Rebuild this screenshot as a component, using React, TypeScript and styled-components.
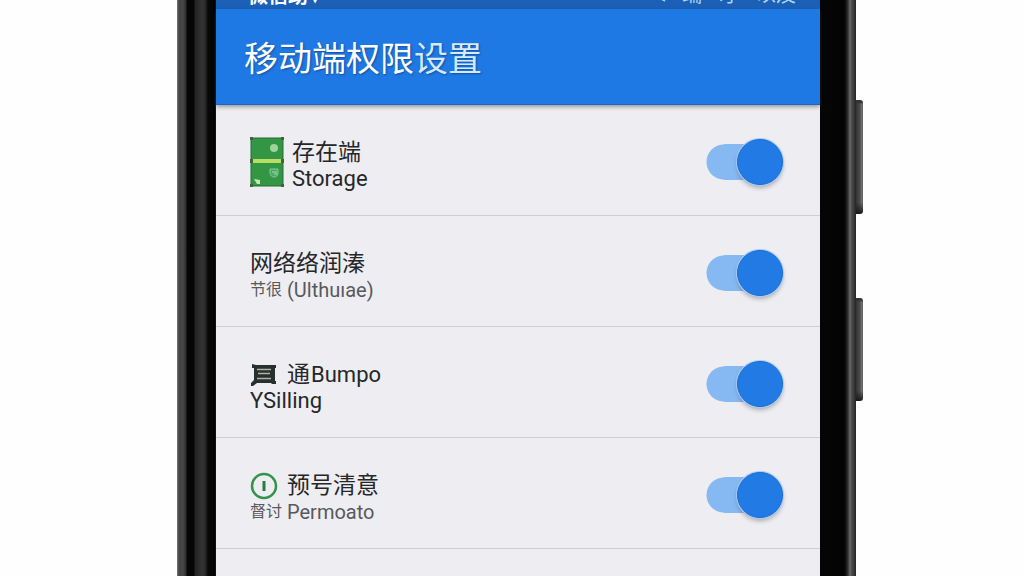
import React from "react";
import styled, { createGlobalStyle, css } from "styled-components";

const GlobalStyle = createGlobalStyle`
  * { box-sizing: border-box; }
  body {
    margin: 0;
    background: #fefefe;
    font-family: Roboto, "Noto Sans CJK SC", sans-serif;
    color: #262729;
  }
`;

const Stage = styled.main`
  display: grid;
  grid-template-columns: 177fr 686fr 161fr;
  height: 100vh;
  overflow: hidden;
`;

const Phone = styled.div`
  grid-column: 2;
  display: flex;
  min-width: 0;
`;

const LeftFrame = styled.div`
  flex: 0 0 39px;
  background: linear-gradient(
    to right,
    #777 0, #444 2px, #484848 6px, #2c2c2c 9px, #070707 10px, #050505 17px,
    #222 18px, #333 25px, #2c2c2c 28px, #080808 31px, #020202 38px, #222 39px
  );
`;

const RightFrame = styled.div`
  flex: 0 0 36px;
  background: linear-gradient(
    to right,
    #050505 0, #030303 24px, #151515 26px, #333 28px, #6a6a6a 30px, #484848 32px, #303030 35px, #202020 36px
  );
`;

const SideKeys = styled.div`
  flex: 0 0 7px;
  display: flex;
  flex-direction: column;
  gap: 84px;
  padding-top: 100px;
`;

const SideKey = styled.div<{ $height: number }>`
  height: ${({ $height }) => $height}px;
  border-radius: 0 3px 3px 0;
  background: linear-gradient(to bottom, #333 2px, transparent 4px, transparent 90%, #191919),
    linear-gradient(to right, #333, #4d4d4f 4px, #77777a 6px, #555);
`;

const Screen = styled.section`
  flex: 1;
  min-width: 0;
  background: #ededf2;
`;

const StatusBar = styled.div`
  display: flex;
  align-items: flex-end;
  justify-content: space-between;
  height: 9px;
  padding: 0 24px 0 32px;
  overflow: hidden;
  background: #1b5fb6;
  color: #fff;
`;

const Carrier = styled.span`
  display: flex;
  gap: 2px;
  font-size: 20px;
  font-weight: 700;
  line-height: 26px;
`;

const Indicators = styled.span`
  display: flex;
  gap: 17px;
  color: #a9d8f5;
  font-size: 20px;
  line-height: 28px;
`;

const AppBar = styled.header`
  position: relative;
  display: flex;
  align-items: center;
  height: 96px;
  padding: 4px 28px 0;
  background: #1f79e5;
  border-bottom: 1px solid #1d66bd;
  box-shadow: 0 2px 4px rgba(60, 55, 50, 0.45);
`;

const Title = styled.h1`
  margin: 0;
  color: #fff;
  font-size: 34px;
  font-weight: 400;
  line-height: 40px;
  text-shadow: 1px 1px 2px rgba(10, 50, 110, 0.6);
`;

const TitleTail = styled.span`
  color: #d5e9ff;
`;

const List = styled.ul`
  margin: 0;
  padding: 0;
  list-style: none;
`;

const Row = styled.li`
  display: flex;
  align-items: center;
  justify-content: space-between;
  height: 111px;
  padding: 4px 36px 0 34px;
  border-bottom: 1px solid #cfcfd3;
`;

const Label = styled.label`
  display: flex;
  align-items: center;
  gap: 8px;
`;

const Lines = styled.span`
  display: flex;
  flex-direction: column;
  padding-top: 8px;
`;

const Primary = styled.span`
  display: flex;
  align-items: center;
  gap: 1px;
  height: 26px;
  font-size: 23px;
  line-height: 26px;
`;

const Latin = styled.span`
  font-size: 22px;
`;

const Secondary = styled.span<{ $muted?: boolean }>`
  display: flex;
  align-items: center;
  gap: 5px;
  font-size: 22px;
  line-height: 26px;
  ${({ $muted }) =>
    $muted &&
    css`
      font-size: 20px;
      color: #58595c;
    `}
`;

const SmallHan = styled.span`
  font-size: 16px;
`;

const InlineIcon = styled.svg`
  flex: none;
  margin-right: 8px;
`;

const Switch = styled.input`
  appearance: none;
  flex: none;
  display: flex;
  align-items: center;
  justify-content: flex-start;
  width: 78px;
  height: 46px;
  margin: 0;
  padding-right: 1px;
  border-radius: 23px;
  background: radial-gradient(circle at 18px 50%, #86b9f1 17px, transparent 18px),
    linear-gradient(#86b9f1, #86b9f1) 18px 50% / 36px 36px no-repeat;
  cursor: pointer;

  &::before {
    content: "";
    width: 44px;
    height: 44px;
    border: 1px solid #1b6bce;
    border-radius: 50%;
    background: #227be4;
    box-shadow: 0 0 0 1px #a5cdf5, 0 3px 4px rgba(80, 75, 80, 0.4);
  }

  &:checked {
    justify-content: flex-end;
  }
`;

const StorageIcon = () => (
  <svg width="34" height="50" viewBox="0 0 34 50" aria-hidden="true">
    <rect x="1" y="1" width="32" height="48" fill="#329644" stroke="#276f32" />
    <rect x="1" y="22" width="32" height="4" fill="#b9dc63" />
    <path d="M0 0h3v3H0zM31 0h3v3h-3zM0 22h3v4H0zM31 22h3v4h-3zM0 47h3v3H0zM31 47h3v3h-3z" fill="#465f3c" />
    <circle cx="24" cy="11" r="4" fill="#9ed39c" />
    <path d="M20 32h8v4c0 3-2 4-4 4s-4-2-4-4z" fill="#48a969" stroke="#87ca98" />
    <path d="M22 35h5M24 37h3" stroke="#a6d9ae" />
    <path d="M4 42l6 1v4H7z" fill="#c8e7a8" />
  </svg>
);

const MessageIcon = () => (
  <InlineIcon width="28" height="24" viewBox="0 0 28 24" aria-hidden="true">
    <path d="M2 1l4 1h20v3h-1v13h1v3h-4l-1-1H7l-4 3H1v-3l3-3V5H2z" fill="#28302d" />
    <path d="M7 6.500h14M8 10.500h12M7 15.500h14" stroke="#aab2ae" strokeWidth="1.300" />
  </InlineIcon>
);

const InfoIcon = () => (
  <InlineIcon width="28" height="28" viewBox="0 0 28 28" aria-hidden="true">
    <circle cx="14" cy="14" r="12" fill="none" stroke="#34934a" strokeWidth="2.500" />
    <path d="M14 9v10" stroke="#2b7d3d" strokeWidth="3" />
  </InlineIcon>
);

export default function App() {
  return (
    <>
      <GlobalStyle />
      <Stage>
        <Phone>
          <LeftFrame />
          <Screen>
            <StatusBar>
              <Carrier>
                <span>微信助</span>
                <span>▾</span>
              </Carrier>
              <Indicators>
                <span>◂</span>
                <span>端</span>
                <span>才</span>
                <span>以及</span>
              </Indicators>
            </StatusBar>
            <AppBar>
              <Title>
                移动端权限<TitleTail>设置</TitleTail>
              </Title>
            </AppBar>
            <List>
              <Row>
                <Label htmlFor="storage">
                  <StorageIcon />
                  <Lines>
                    <Primary>存在端</Primary>
                    <Secondary>Storage</Secondary>
                  </Lines>
                </Label>
                <Switch id="storage" type="checkbox" role="switch" defaultChecked />
              </Row>
              <Row>
                <Label htmlFor="network">
                  <Lines>
                    <Primary>网络络润溱</Primary>
                    <Secondary $muted>
                      <SmallHan>节很</SmallHan>(Ulthuıae)
                    </Secondary>
                  </Lines>
                </Label>
                <Switch id="network" type="checkbox" role="switch" defaultChecked />
              </Row>
              <Row>
                <Label htmlFor="messages">
                  <Lines>
                    <Primary>
                      <MessageIcon />通<Latin>Bumpo</Latin>
                    </Primary>
                    <Secondary>YSilling</Secondary>
                  </Lines>
                </Label>
                <Switch id="messages" type="checkbox" role="switch" defaultChecked />
              </Row>
              <Row>
                <Label htmlFor="alerts">
                  <Lines>
                    <Primary>
                      <InfoIcon />预号清意
                    </Primary>
                    <Secondary $muted>
                      <SmallHan>督讨</SmallHan>Permoato
                    </Secondary>
                  </Lines>
                </Label>
                <Switch id="alerts" type="checkbox" role="switch" defaultChecked />
              </Row>
            </List>
          </Screen>
          <RightFrame />
          <SideKeys>
            <SideKey $height={114} />
            <SideKey $height={103} />
          </SideKeys>
        </Phone>
      </Stage>
    </>
  );
}
